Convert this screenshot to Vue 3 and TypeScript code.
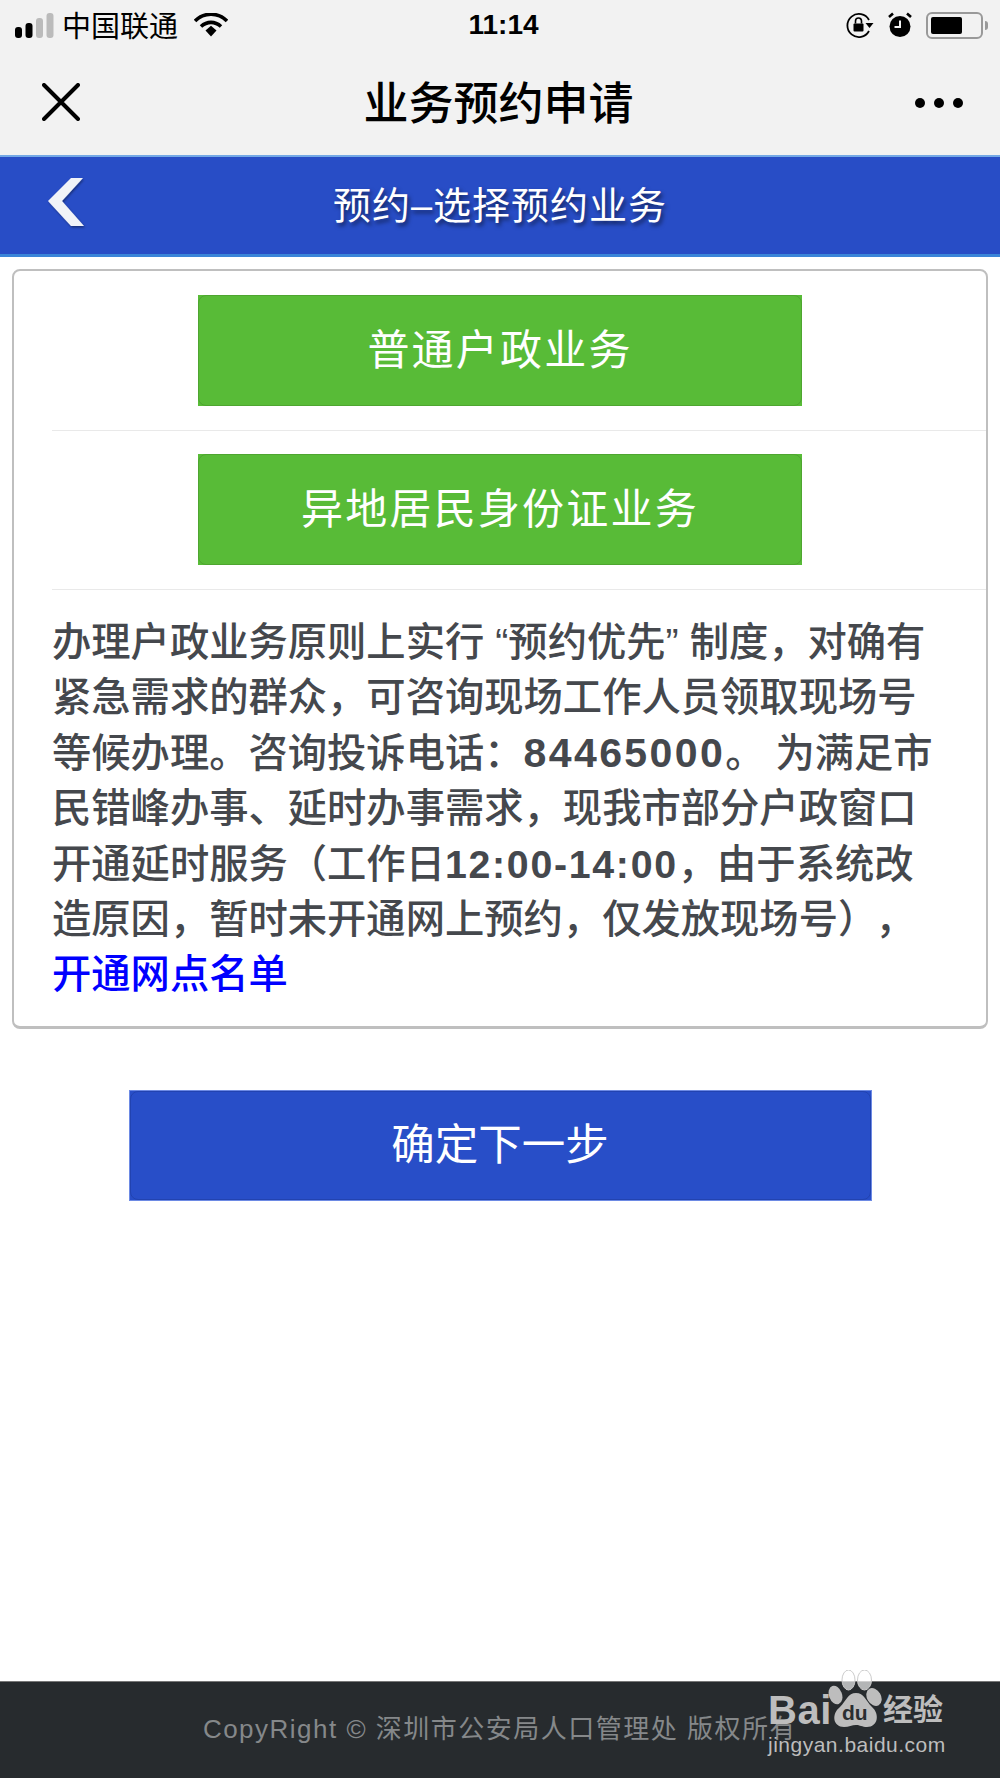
<script setup lang="ts">
const services = ['普通户政业务', '异地居民身份证业务'];
</script>

<template>
  <div class="page">
    <div class="status-bar">
      <div class="status-left">
        <svg class="signal" width="40" height="25" viewBox="0 0 40 25">
          <rect x="0" y="14" width="7" height="11" rx="3" fill="#000" />
          <rect x="10.5" y="10" width="7" height="15" rx="3" fill="#000" />
          <rect x="21" y="5" width="7" height="20" rx="3" fill="#bbb" />
          <rect x="31.5" y="0" width="7" height="25" rx="3" fill="#bbb" />
        </svg>
        <span class="carrier">中国联通</span>
        <svg class="wifi" width="34" height="24" viewBox="0 0 34 24">
          <path d="M1 8 C10 -1 24 -1 33 8" fill="none" stroke="#000" stroke-width="3.6" />
          <path d="M7 13.5 C13 8 21 8 27 13.5" fill="none" stroke="#000" stroke-width="3.6" />
          <path d="M11.5 17.5 L17 12.8 L22.5 17.5 L17 23.5 Z" fill="#000" />
        </svg>
      </div>
      <div class="time">11:14</div>
      <div class="status-right">
        <svg width="28" height="26" viewBox="0 0 28 26">
          <path d="M23 8 A11.5 11.5 0 1 0 23 19" fill="none" stroke="#000" stroke-width="1.8" />
          <path d="M19.5 11 L27.5 11 L23.5 16 Z" fill="#000" />
          <rect x="7.5" y="11.5" width="10" height="8" rx="1" fill="#000" />
          <path d="M9.5 11.5 V9 A3 3 0 0 1 15.5 9 V11.5" fill="none" stroke="#000" stroke-width="1.6" />
        </svg>
        <svg width="24" height="26" viewBox="0 0 24 26">
          <circle cx="12" cy="14.5" r="10.5" fill="#000" />
          <path d="M1 5 L5 1.5 M23 5 L19 1.5" stroke="#000" stroke-width="2.6" />
          <path d="M12 8.5 V15 H6.5" fill="none" stroke="#f2f2f2" stroke-width="2" />
        </svg>
        <div class="battery">
          <div class="battery-body"><div class="battery-level"></div></div>
          <div class="battery-tip"></div>
        </div>
      </div>
    </div>

    <div class="nav-bar">
      <svg class="close" width="38" height="38" viewBox="0 0 38 38">
        <path d="M2 2 L36 36 M36 2 L2 36" stroke="#000" stroke-width="4" stroke-linecap="round" />
      </svg>
      <div class="nav-title">业务预约申请</div>
      <div class="more"><i></i><i></i><i></i></div>
    </div>

    <div class="sub-header">
      <svg class="back" width="42" height="54" viewBox="0 0 42 54">
        <defs>
          <filter id="back-shadow" x="-20%" y="-20%" width="140%" height="140%">
            <feDropShadow dx="1" dy="1.5" stdDeviation="1.2" flood-color="#000" flood-opacity="0.4" />
          </filter>
        </defs>
        <path d="M37 1 H25 L2 24 L25 49 H38 L16 24 Z" fill="#f1f3f8" filter="url(#back-shadow)" />
      </svg>
      <div class="sub-title">预约–选择预约业务</div>
    </div>

    <div class="card">
      <div v-for="name in services" :key="name" class="service-row">
        <div class="btn btn-green"><span class="btn-face">{{ name }}</span></div>
      </div>
      <p class="notice">办理户政业务原则上实行<span class="q-open">“</span>预约优先<span class="q-close">”</span>制度，对确有<br />紧急需求的群众，可咨询现场工作人员领取现场号<br />等候办理。咨询投诉电话：<b class="phone">84465000</b>。 为满足市<br />民错峰办事、延时办事需求，现我市部分户政窗口<br />开通延时服务（工作日<b class="hours">12:00-14:00</b>，由于系统改<br />造原因，暂时未开通网上预约，仅发放现场号）<span class="comma">，</span><br /><a class="link">开通网点名单</a></p>
    </div>

    <div class="next-wrap">
      <div class="btn btn-blue"><span class="btn-face">确定下一步</span></div>
    </div>

    <div class="footer">CopyRight © 深圳市公安局人口管理处 版权所有</div>

    <div class="watermark">
      <div class="wm-top">
        <span class="wm-bai">Bai</span>
        <svg class="wm-paw" width="54" height="58" viewBox="0 0 54 58">
          <ellipse cx="20.5" cy="10" rx="6.5" ry="10" fill="#fff" fill-opacity="0.65" stroke="#ccc" stroke-width="1" />
          <ellipse cx="36.5" cy="10" rx="7" ry="10" fill="#fff" fill-opacity="0.65" stroke="#ccc" stroke-width="1" />
          <ellipse cx="7.5" cy="25" rx="6.5" ry="9.5" fill="#bdbdbd" transform="rotate(-20 7.5 25)" />
          <ellipse cx="46" cy="27" rx="7" ry="9.5" fill="#bdbdbd" transform="rotate(-30 46 27)" />
          <path d="M28 23 C36 23 38 31 44 37 C52 44 50 57 39 57 C34 57 32 55 28 55 C24 55 21 57 16 57 C5 57 3 44 12 37 C18 31 20 23 28 23 Z" fill="#bdbdbd" />
        </svg>
        <span class="wm-du">du</span>
        <span class="wm-cn">经验</span>
      </div>
      <div class="wm-url">jingyan.baidu.com</div>
    </div>
  </div>
</template>

<style>
html,
body {
  margin: 0;
  background: #fff;
}
</style>

<style scoped>
.page {
  position: relative;
  display: flex;
  flex-direction: column;
  width: 1000px;
  height: 1778px;
  overflow: hidden;
  background: #fff;
  font-family: 'Liberation Sans', 'Noto Sans CJK SC', sans-serif;
}

.status-bar {
  display: flex;
  align-items: center;
  justify-content: space-between;
  height: 50px;
  padding: 0 12px 0 15px;
  background: #f2f2f2;
  color: #000;
}

.status-left,
.status-right {
  display: flex;
  align-items: center;
  width: 240px;
}

.status-right {
  justify-content: flex-end;
  gap: 14px;
}

.carrier {
  margin-left: 7px;
  margin-bottom: 2px;
  font-size: 29px;
}

.wifi {
  margin-left: 16px;
}

.time {
  margin-left: 4px;
  font-size: 28px;
  font-weight: 700;
}

.battery {
  display: flex;
  align-items: center;
}

.battery-body {
  box-sizing: border-box;
  width: 57px;
  height: 27px;
  padding: 3px;
  border: 2px solid #999;
  border-radius: 6px;
}

.battery-level {
  width: 31px;
  height: 100%;
  background: #000;
  border-radius: 2px;
}

.battery-tip {
  width: 3px;
  height: 9px;
  margin-left: 2px;
  background: #999;
  border-radius: 0 3px 3px 0;
}

.nav-bar {
  display: flex;
  align-items: center;
  justify-content: space-between;
  height: 105px;
  padding: 0 37px 0 42px;
  background: #f2f2f2;
}

.close {
  margin-bottom: 2px;
}

.nav-title {
  margin-left: 2px;
  margin-bottom: 4px;
  font-size: 45px;
  font-weight: 500;
  color: #000;
}

.more {
  display: flex;
  gap: 9px;
}

.more i {
  width: 10px;
  height: 10px;
  background: #000;
  border-radius: 50%;
}

.sub-header {
  position: relative;
  display: flex;
  align-items: center;
  justify-content: center;
  height: 97px;
  background: #284dc6;
  border-top: 2px solid #74a9e6;
  border-bottom: 3px solid #3a85d9;
}

.back {
  position: absolute;
  left: 46px;
  top: 20px;
}

.sub-title {
  margin-bottom: 7px;
  font-size: 38px;
  letter-spacing: 1px;
  color: #fff;
  text-shadow: 2px 3px 4px rgba(0, 0, 0, 0.55);
}

.card {
  margin: 12px 12px 0 12px;
  padding-left: 38px;
  background: #fff;
  border: 2px solid #bfbfbf;
  border-bottom-width: 3px;
  border-radius: 8px;
  height: 755px;
}

.service-row {
  display: flex;
  justify-content: center;
  box-sizing: border-box;
  height: 160px;
  margin-left: -38px;
  padding: 24px 0 0 38px;
  background: linear-gradient(#e9e9e9, #e9e9e9) no-repeat left 38px bottom 0 / 100% 1px;
}

.service-row + .service-row {
  height: 159px;
  padding-top: 23px;
}

.service-row .btn {
  margin-left: -38px;
}

.btn {
  display: flex;
  box-sizing: border-box;
  height: 111px;
}

.btn-face {
  display: flex;
  flex: 1;
  align-items: center;
  justify-content: center;
  box-sizing: border-box;
  padding-bottom: 8px;
  color: #fff;
  border-radius: 8px;
}

.btn-green {
  width: 604px;
  background: #58bb37;
}

.btn-green .btn-face {
  border: 1px solid #4ea530;
  font-size: 42px;
  letter-spacing: 2.2px;
}

.btn-blue {
  width: 743px;
  background: #284ec8;
  border: 1px solid #6d8ae4;
}

.btn-blue .btn-face {
  border: 1px solid #2243b0;
  font-size: 43.5px;
}

.notice {
  margin: 25px 0 0;
  font-size: 39.3px;
  font-weight: 500;
  line-height: 55.4px;
  color: #45484d;
  white-space: nowrap;
}

.q-open {
  margin-left: 11px;
}

.q-close {
  margin-right: 11px;
}

.phone {
  font-size: 41px;
  letter-spacing: 2.4px;
}

.hours {
  letter-spacing: 1.7px;
}

.comma {
  margin-left: 18px;
}

.link {
  color: #0000ff;
}

.next-wrap {
  display: flex;
  justify-content: center;
  margin-top: 61px;
}

.footer {
  display: flex;
  align-items: center;
  justify-content: center;
  box-sizing: border-box;
  height: 97px;
  margin-top: auto;
  padding-bottom: 7px;
  background: #272b2e;
  border-top: 1px solid #777;
  color: #85888a;
  font-size: 26px;
  letter-spacing: 1.5px;
}

.watermark {
  position: absolute;
  left: 768px;
  top: 1670px;
  color: #bdbdbd;
}

.wm-top {
  position: relative;
  display: flex;
  align-items: flex-end;
  height: 58px;
}

.wm-bai {
  width: 60px;
  font-size: 40px;
  font-weight: 700;
  letter-spacing: 0.5px;
  line-height: 36px;
}

.wm-du {
  position: absolute;
  left: 74px;
  bottom: 3px;
  font-size: 21px;
  font-weight: 700;
  line-height: 24px;
  color: #2a2e31;
}

.wm-cn {
  margin-left: 1px;
  font-size: 30px;
  font-weight: 700;
  line-height: 36px;
}

.wm-url {
  margin-top: 4px;
  font-size: 21px;
  letter-spacing: 0.5px;
  line-height: 26px;
}
</style>
